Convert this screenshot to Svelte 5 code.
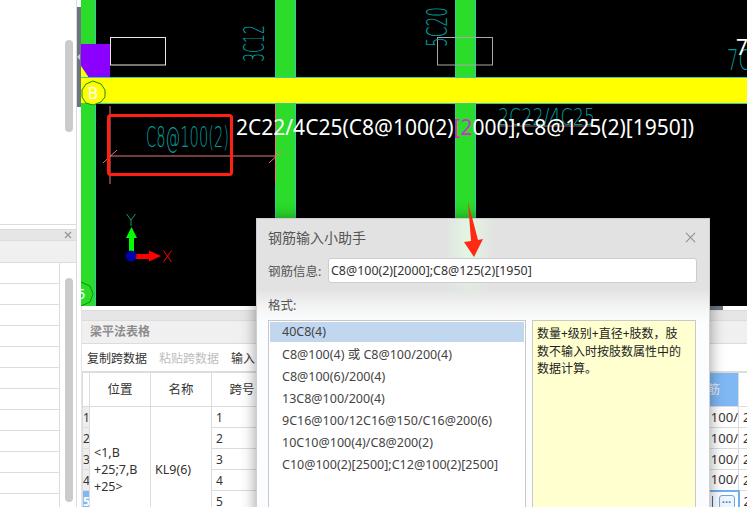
<script>
  const formats = [
    '40C8(4)',
    'C8@100(4) 或 C8@100/200(4)',
    'C8@100(6)/200(4)',
    '13C8@100/200(4)',
    '9C16@100/12C16@150/C16@200(6)',
    '10C10@100(4)/C8@200(2)',
    'C10@100(2)[2500];C12@100(2)[2500]'
  ];
  const sideRows = Array.from({ length: 12 }, (_, i) => i);
  const rows = [1, 2, 3, 4, 5, 6];
</script>

<div class="app">
  <aside class="side">
    <div class="side-top"><div class="thumb top-thumb"></div></div>
    <div class="side-panel">
      <div class="side-head">
        <svg class="x-small" viewBox="0 0 8 8"><path d="M1 1L7 7M7 1L1 7" /></svg>
      </div>
      <div class="side-sub"></div>
      <div class="side-body">
        <div class="side-list">
          {#each sideRows as r}<div class="side-row"></div>{/each}
        </div>
        <div class="side-scroll"><div class="thumb list-thumb"></div></div>
      </div>
    </div>
  </aside>

  <div class="split"><div class="split-grip"><span class="grip-arrow"></span></div></div>

  <main class="main">
    <svg class="canvas" viewBox="81 0 666 306" width="666" height="306">
      <rect x="81" y="0" width="666" height="306" fill="#000" />
      <rect x="81" y="0" width="14" height="306" fill="#2bdc2b" />
      <rect x="95" y="0" width="1" height="306" fill="#35c9b0" />
      <g fill="#2bdc2b" stroke="#35c9b0" stroke-width="1">
        <rect x="275.5" y="-2" width="20" height="310" />
        <rect x="455.5" y="-2" width="20" height="310" />
      </g>
      <polygon points="81,44 110,44 110,78 89,78 81,66" fill="#8c00ff" />
      <polygon points="81,66 89,78 81,78" fill="#ff0" />
      <rect x="81" y="78" width="666" height="25" fill="#ff0" />
      <path d="M81 77.5H747M96 103.5H747" stroke="#35c9b0" stroke-width="1" />

      <rect x="110.5" y="37.5" width="55" height="27.5" fill="none" stroke="#e8e8e8" />
      <rect x="437.5" y="37.5" width="55" height="27.5" fill="none" stroke="#a8a8a8" />

      <polygon points="93,81 101,84 105,90 105,97 101,102 93,105 86,103 82,97 82,90 86,84" fill="#ff0" stroke="#0a960a" />
      <text x="93" y="98.5" class="axis-b">B</text>
      <polygon points="81,282 90,286 93,294 90,302 81,306 72,302 69,294 72,286" fill="#2bdc2b" stroke="#0a960a" />
      <text x="81" y="299" class="axis-5">5</text>

      <g stroke="#e87a7a" stroke-width="1" fill="none">
        <path d="M110 106V184M275.5 106V184M103 163L117 150M269 163L283 150M110 156H275" />
        <path d="M498 126H600" opacity="0.7" />
      </g>

      <text x="146" y="147" class="cad big" textLength="83" lengthAdjust="spacingAndGlyphs">C8@100(2)</text>
      <text transform="translate(264 62) rotate(-90)" class="cad mid" textLength="37" lengthAdjust="spacingAndGlyphs">3C12</text>
      <text transform="translate(447 47) rotate(-90)" class="cad mid" textLength="40" lengthAdjust="spacingAndGlyphs">5C20</text>
      <text x="498" y="125" class="cad dim" textLength="97" lengthAdjust="spacingAndGlyphs">2C22/4C25</text>
      <text x="727" y="70" class="cad mid" textLength="24" lengthAdjust="spacingAndGlyphs">7C</text>

      <text x="236" y="135" class="hint">2C22/4C25(C8@100(2)<tspan class="hint-pink">[2</tspan>000];C8@125(2)[1950])</text>
      <text x="736" y="55" class="hint">7</text>

      <rect x="108.5" y="115.5" width="123" height="59" rx="2" fill="none" stroke="#ff2014" stroke-width="3" />

      <rect x="129" y="236" width="5" height="16" fill="#0f0" />
      <polygon points="131.500,227 126,238 137,238" fill="#0f0" />
      <rect x="135" y="254" width="16" height="5" fill="#f00" />
      <polygon points="149,250.500 149,261.500 161,256" fill="#f00" />
      <circle cx="131" cy="256" r="5.500" fill="#0000a8" />
      <path d="M126.500 214L131 220L135.500 214M131 220V226" class="axis-y" />
      <path d="M163.500 250.500L171.500 262M171.500 250.500L163.500 262" class="axis-x" />
    </svg>

    <section class="panel">
      <div class="panel-strip"><div class="strip-thumb"></div></div>
      <div class="panel-head"></div>
      <div class="panel-title">梁平法表格</div>
      <div class="toolbar">
        <span>复制跨数据</span>
        <span class="disabled">粘贴跨数据</span>
        <span>输入</span>
      </div>
      <table class="grid">
        <colgroup>
          <col class="c-num" /><col class="c-pos" /><col class="c-name" /><col class="c-span" />
          <col class="c-fill" /><col class="c-bar" /><col class="c-last" />
        </colgroup>
        <thead>
          <tr>
            <th class="num"></th><th>位置</th><th>名称</th><th>跨号</th><th></th>
            <th class="sel-head">箍筋</th><th></th>
          </tr>
        </thead>
        <tbody>
          {#each rows as r}
            <tr>
              <td class={r === 5 ? 'num num-sel' : 'num'}>{r}</td>
              {#if r === 1}
                <td rowspan="6" class="merged">&lt;1,B<br />+25;7,B<br />+25&gt;</td>
                <td rowspan="6" class="merged">KL9(6)</td>
              {/if}
              <td>{r}</td>
              <td></td>
              {#if r === 5}
                <td class="edit-cell"><span class="caret"></span><span class="more">···</span></td>
              {:else}
                <td class="bar">100/</td>
              {/if}
              <td>2</td>
            </tr>
          {/each}
        </tbody>
      </table>
    </section>
  </main>

  <div class="dialog">
    <div class="glow"></div>
    <header class="dlg-head">
      <h2>钢筋输入小助手</h2>
      <svg class="dlg-close" viewBox="0 0 12 12"><path d="M1 1L11 11M11 1L1 11" /></svg>
    </header>
    <div class="field">
      <span class="field-label">钢筋信息:</span>
      <div class="field-input">C8@100(2)[2000];C8@125(2)[1950]</div>
    </div>
    <div class="fmt-label">格式:</div>
    <div class="fmt-body">
      <ul class="fmt-list">
        {#each formats as f, i}
          <li class:active={i === 0}>{f}</li>
        {/each}
      </ul>
      <div class="fmt-note">数量+级别+直径+肢数&#xFF0C;肢数不输入时按肢数属性中的数据计算&#x3002;</div>
    </div>
  </div>

  <svg class="arrow" viewBox="0 0 20 56" width="20" height="56">
    <polygon points="4,0 14,38 19,37 10,55 0,40 7,39" fill="#ff2a14" />
  </svg>
</div>

<style>
  :global(body) {
    margin: 0;
    background: #fff;
  }
  .app {
    position: relative;
    display: flex;
    width: 747px;
    height: 507px;
    overflow: hidden;
    background: #fff;
    font-family: "Noto Sans", "Noto Sans CJK SC", sans-serif;
    font-size: 12px;
    color: #333;
  }

  .side {
    display: flex;
    flex-direction: column;
    flex: none;
    box-sizing: border-box;
    width: 77px;
    border-right: 1px solid #dcdcdc;
  }
  .side-top {
    display: flex;
    justify-content: flex-end;
    box-sizing: border-box;
    height: 225px;
    padding: 40px 3px 0 0;
    border-bottom: 1px solid #dcdcdc;
  }
  .thumb {
    width: 8px;
    border-radius: 4px;
    background: #cbcbcb;
  }
  .top-thumb {
    height: 92px;
  }
  .side-panel {
    flex: 1;
    margin-top: 4px;
    min-height: 0;
  }
  .side-head {
    display: flex;
    align-items: center;
    justify-content: flex-end;
    box-sizing: border-box;
    height: 12px;
    padding-right: 4px;
    background: #e6e6e6;
    border-top: 1px solid #dcdcdc;
    border-bottom: 1px solid #dcdcdc;
  }
  .x-small {
    width: 8px;
    height: 8px;
  }
  .x-small path {
    stroke: #999;
    stroke-width: 1.400;
    fill: none;
  }
  .side-sub {
    box-sizing: border-box;
    height: 22px;
    background: #f0f0f0;
    border-bottom: 1px solid #dcdcdc;
  }
  .side-body {
    display: flex;
  }
  .side-list {
    box-sizing: border-box;
    width: 60px;
    border-right: 1px solid #dcdcdc;
  }
  .side-row {
    box-sizing: border-box;
    height: 21px;
    border-bottom: 1px solid #dcdcdc;
  }
  .side-scroll {
    display: flex;
    justify-content: center;
    flex: 1;
    padding-top: 15px;
  }
  .list-thumb {
    height: 224px;
    margin-left: 1px;
  }

  .split {
    flex: none;
    width: 4px;
    padding-top: 7px;
  }
  .split-grip {
    display: flex;
    align-items: center;
    height: 100px;
    background: #6b7580;
  }
  .grip-arrow {
    width: 0;
    height: 0;
    border-top: 3px solid transparent;
    border-bottom: 3px solid transparent;
    border-right: 3px solid #c8ccd0;
  }

  .main {
    display: flex;
    flex-direction: column;
    flex: 1;
    min-width: 0;
  }
  .canvas {
    display: block;
    flex: none;
    font-family: "Noto Sans", sans-serif;
  }
  .axis-b {
    fill: #fff;
    font-size: 16px;
    text-anchor: middle;
  }
  .axis-5 {
    fill: #fff;
    font-size: 15px;
    text-anchor: middle;
  }
  .axis-y {
    fill: none;
    stroke: #0c9c70;
    stroke-width: 1;
  }
  .axis-x {
    fill: none;
    stroke: #f00;
    stroke-width: 1;
  }
  .cad {
    fill: #009c9c;
    font-family: "DejaVu Sans", sans-serif;
    font-weight: 200;
  }
  .cad.big {
    font-size: 28px;
  }
  .cad.mid {
    font-size: 29px;
  }
  .cad.dim {
    font-size: 23px;
  }
  .hint {
    fill: #fff;
    font-size: 21px;
  }
  .hint-pink {
    fill: #d030c8;
  }

  .panel {
    flex: 1;
    min-height: 0;
    background: #fff;
    border-left: 1px solid #e4e4e4;
  }
  .panel-strip {
    height: 4px;
    background: #fff;
  }
  .strip-thumb {
    width: 423px;
    height: 4px;
    margin-left: 218px;
    background: #6b7580;
  }
  .panel-head {
    box-sizing: border-box;
    height: 11px;
    background: #e6e6e6;
    border-top: 1px solid #dcdcdc;
    border-bottom: 1px solid #dcdcdc;
  }
  .panel-title {
    box-sizing: border-box;
    height: 23px;
    padding-left: 8px;
    line-height: 22px;
    font-weight: 700;
    color: #8c8c8c;
    background: #f0f0f0;
    border-bottom: 1px solid #dcdcdc;
  }
  .toolbar {
    display: flex;
    align-items: center;
    gap: 12px;
    box-sizing: border-box;
    height: 28px;
    padding-left: 5px;
    color: #333;
    border-bottom: 1px solid #dcdcdc;
  }
  .disabled {
    color: #bdbdbd;
  }
  .grid {
    width: 665px;
    table-layout: fixed;
    border-collapse: collapse;
    color: #333;
  }
  .c-num { width: 7px; }
  .c-pos { width: 61px; }
  .c-name { width: 61px; }
  .c-span { width: 61px; }
  .c-fill { width: 404px; }
  .c-bar { width: 62px; }
  .c-last { width: 9px; }
  .grid th,
  .grid td {
    box-sizing: border-box;
    border: 1px solid #dcdcdc;
    overflow: hidden;
    white-space: nowrap;
    padding: 0 0 0 4px;
    height: 21px;
    line-height: 17px;
  }
  .grid th {
    height: 34px;
    padding: 0;
    font-weight: 400;
    font-size: 12.500px;
    text-align: center;
  }
  .grid td.num {
    padding: 0;
    background: #eee;
  }
  .grid td.num-sel {
    background: #7fb8f5;
    color: #fff;
    font-weight: 700;
  }
  .grid td.merged {
    white-space: normal;
    padding: 0 2px 0 4px;
    font-size: 12.500px;
  }
  .grid th.sel-head {
    background: #7fb8f5;
    color: #e8eef5;
  }
  .grid td.bar {
    padding: 0;
    text-align: right;
    font-size: 13px;
  }
  .grid td.edit-cell {
    padding: 0;
    text-align: right;
    border: 2px solid #6fb0f0;
    vertical-align: middle;
  }
  .caret {
    display: inline-block;
    width: 1px;
    height: 13px;
    margin-right: 6px;
    background: #3b6fb0;
    vertical-align: middle;
  }
  .more {
    display: inline-block;
    box-sizing: border-box;
    width: 16px;
    height: 14px;
    margin-right: 3px;
    border: 1px solid #6fa8e0;
    border-radius: 3px;
    background: #eef5fc;
    color: #3b82d0;
    font-size: 11px;
    line-height: 12px;
    text-align: center;
    font-weight: 700;
    vertical-align: middle;
  }

  .dialog {
    position: absolute;
    left: 256px;
    top: 218px;
    box-sizing: border-box;
    width: 454px;
    height: 320px;
    padding: 0 12px 0 11px;
    border: 1px solid #cfcfcf;
    border-bottom: 0;
    background: linear-gradient(#e2e2e2 0, #e2e2e2 70px, #f4f4f4 88px, #fcfdff 104px, #fafcff 100%);
    box-shadow: 0 0 14px rgba(0, 0, 0, .4);
  }
  .glow {
    position: absolute;
    left: 187px;
    top: 0;
    width: 50px;
    height: 82px;
    background: linear-gradient(90deg, rgba(226, 246, 226, 0), #e2f6e2 50%, rgba(226, 246, 226, 0));
    -webkit-mask-image: linear-gradient(#000 60%, transparent);
    mask-image: linear-gradient(#000 60%, transparent);
  }
  .dlg-head {
    position: relative;
    display: flex;
    align-items: center;
    justify-content: space-between;
    box-sizing: border-box;
    height: 38px;
    padding: 0 1px 2px 0;
  }
  .dlg-head h2 {
    margin: 0;
    font-size: 14px;
    font-weight: 400;
    color: #555;
  }
  .dlg-close {
    width: 11px;
    height: 11px;
  }
  .dlg-close path {
    stroke: #8c8c8c;
    stroke-width: 1.100;
    fill: none;
  }
  .field {
    position: relative;
    display: flex;
    align-items: center;
    height: 25px;
    margin-top: 1px;
  }
  .field-label {
    width: 60px;
    flex: none;
    font-size: 12.500px;
    color: #555;
    margin-top: -1px;
  }
  .field-input {
    flex: 1;
    box-sizing: border-box;
    height: 25px;
    padding-left: 2px;
    line-height: 23px;
    font-size: 12.450px;
    color: #333;
    background: #fff;
    border: 1px solid #cdcdcd;
    border-radius: 3px;
  }
  .fmt-label {
    position: relative;
    height: 37px;
    padding-top: 14px;
    box-sizing: border-box;
    line-height: 17px;
    font-size: 12.500px;
    color: #555;
  }
  .fmt-body {
    display: flex;
    gap: 6px;
    height: 200px;
  }
  .fmt-list {
    box-sizing: border-box;
    width: 258px;
    margin: 0;
    padding: 1px;
    list-style: none;
    background: #fff;
    border: 1px solid #c8c8c8;
  }
  .fmt-list li {
    height: 22px;
    padding-left: 12px;
    line-height: 21px;
    font-size: 12.500px;
    color: #444;
    white-space: nowrap;
  }
  .fmt-list li.active {
    height: 20px;
    margin-bottom: 2px;
    line-height: 20px;
    background: #c0d7ef;
  }
  .fmt-note {
    box-sizing: border-box;
    width: 164px;
    padding: 4px 10px 0 4px;
    line-height: 17.500px;
    color: #222;
    background: #ffffd0;
    border: 1px solid #c8c8c8;
  }
  .arrow {
    position: absolute;
    left: 464px;
    top: 202px;
  }
</style>
